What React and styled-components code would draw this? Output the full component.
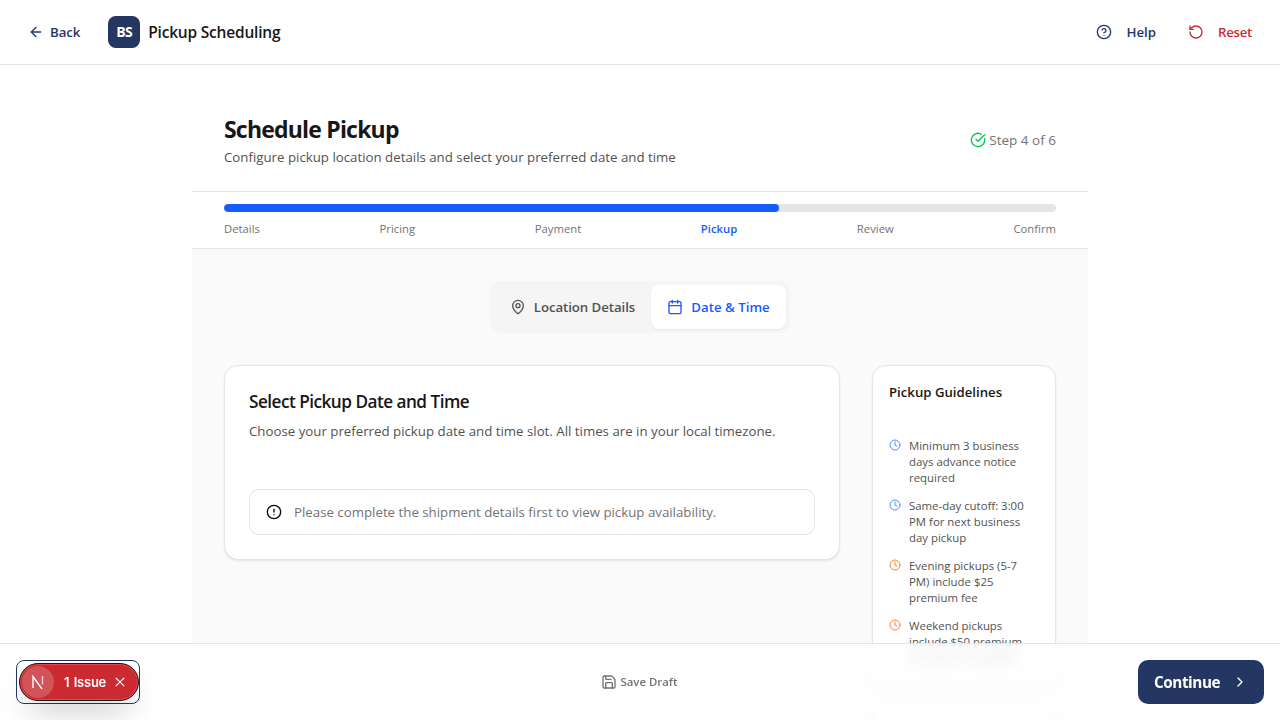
import React from 'react';
import styled, { createGlobalStyle } from 'styled-components';
import {
  ArrowLeft,
  CircleHelp,
  RotateCcw,
  CircleCheckBig,
  MapPin,
  Calendar,
  CircleAlert,
  Clock,
  Save,
  ChevronRight,
} from 'lucide-react';

const GlobalStyle = createGlobalStyle`
  *, *::before, *::after { box-sizing: border-box; }
  html, body { margin: 0; height: 100%; overflow: hidden; }
  body {
    background: #fff;
    color: #171717;
    font-family: 'Open Sans', 'Noto Sans', sans-serif;
    font-size: 13.28px;
    line-height: 20px;
  }
  h1, h2, h3, p, ul { margin: 0; padding: 0; }
  button { font: inherit; border: 0; background: none; padding: 0; }
  svg { flex-shrink: 0; display: block; }
`;

const Page = styled.div`
  height: 720px;
  overflow: hidden;
`;

const TopBar = styled.header`
  height: 65px;
  padding: 0 28px;
  display: flex;
  align-items: center;
  justify-content: space-between;
  border-bottom: 1px solid #e5e5e5;
  background: #fff;
`;

const BarGroup = styled.div`
  display: flex;
  align-items: center;
  gap: ${(p) => p.$gap}px;
`;

const TextButton = styled.button`
  display: flex;
  align-items: center;
  gap: ${(p) => p.$gap}px;
  font-weight: 600;
  letter-spacing: ${(p) => p.$tracking || 0}px;
  color: ${(p) => (p.$danger ? '#cb2a31' : '#243763')};
`;

const Brand = styled.div`
  display: flex;
  align-items: center;
  gap: 8px;
  font-size: 15.5px;
  line-height: 24px;
  font-weight: 600;
  letter-spacing: -0.2px;
`;

const Logo = styled.span`
  width: 32px;
  height: 32px;
  border-radius: 8px;
  display: grid;
  place-items: center;
  background: #243763;
  color: #fff;
  font-size: 14px;
  font-weight: 700;
  letter-spacing: -0.5px;
`;

const Main = styled.main`
  width: 896px;
  margin: 0 auto;
`;

const Intro = styled.section`
  height: 127px;
  padding: 24px 32px 0;
  display: flex;
  align-items: center;
  justify-content: space-between;
  border-bottom: 1px solid #e5e5e5;
`;

const Title = styled.h1`
  font-size: 23px;
  line-height: 32px;
  font-weight: 700;
  letter-spacing: -0.8px;
`;

const Lead = styled.p`
  margin-top: 2px;
  color: #525252;
`;

const StepCount = styled.div`
  display: flex;
  align-items: center;
  gap: 3px;
  font-size: 13.5px;
  color: #737373;
  svg { color: #00c951; }
`;

const Progress = styled.section`
  padding: 12px 32px 11px;
  border-bottom: 1px solid #e5e5e5;
`;

const Track = styled.div`
  height: 8px;
  border-radius: 4px;
  background: #e5e5e5;
  overflow: hidden;
`;

const Fill = styled.div`
  height: 100%;
  border-radius: 4px;
  background: #155dfc;
`;

const Steps = styled.div`
  margin-top: 9px;
  display: flex;
  justify-content: space-between;
  font-size: 11.3px;
  line-height: 16px;
`;

const Step = styled.span`
  color: ${(p) => (p.$active ? '#155dfc' : '#737373')};
  font-weight: ${(p) => (p.$active ? 600 : 400)};
`;

const Content = styled.section`
  padding: 32px;
  background: #fafafa;
`;

const Tabs = styled.div`
  width: 300px;
  height: 52px;
  margin: 0 auto;
  padding: 4px;
  display: flex;
  border-radius: 10px;
  background: #f5f5f5;
`;

const Tab = styled.button`
  display: flex;
  align-items: center;
  justify-content: center;
  gap: 8px;
  flex: 0 0 ${(p) => p.$width}px;
  letter-spacing: ${(p) => p.$tracking || 0}px;
  border-radius: 8px;
  font-weight: 600;
  color: ${(p) => (p.$active ? '#155dfc' : '#525252')};
  background: ${(p) => (p.$active ? '#fff' : 'transparent')};
  box-shadow: ${(p) => (p.$active ? '0 1px 2px rgba(0, 0, 0, 0.06)' : 'none')};
`;

const Columns = styled.div`
  margin-top: 32px;
  display: grid;
  grid-template-columns: 616px 184px;
  gap: 32px;
  align-items: start;
`;

const Card = styled.div`
  min-height: ${(p) => p.$minHeight || 0}px;
  padding: ${(p) => p.$pad}px;
  border: 1px solid #e5e5e5;
  border-radius: 14px;
  background: #fff;
  box-shadow: 0 1px 3px rgba(0, 0, 0, 0.05), 0 1px 2px rgba(0, 0, 0, 0.04);
`;

const CardTitle = styled.h2`
  font-size: 17.2px;
  line-height: 23px;
  font-weight: 600;
  letter-spacing: -0.52px;
`;

const CardText = styled.p`
  margin-top: 8px;
  color: #525252;
`;

const Notice = styled.div`
  margin-top: 48px;
  height: 46px;
  padding: 0 16px;
  display: flex;
  align-items: center;
  gap: 12px;
  border: 1px solid #e5e5e5;
  border-radius: 10px;
  color: #737373;
  svg { color: #0a0a0a; }
`;

const Sidebar = styled.aside`
  display: grid;
  gap: 24px;
`;

const SideTitle = styled.h3`
  font-size: 13.2px;
  line-height: 20px;
  font-weight: 600;
`;

const Rules = styled.ul`
  margin-top: 36px;
  display: grid;
  gap: 12px;
  list-style: none;
`;

const Rule = styled.li`
  display: flex;
  gap: 8px;
  font-size: 11.4px;
  line-height: 16px;
  color: #525252;
  white-space: pre-line;
  svg { margin-top: 1px; color: ${(p) => (p.$fee ? '#ff8133' : '#5092ff')}; }
`;

const Footer = styled.footer`
  position: fixed;
  left: 0;
  right: 0;
  bottom: 0;
  height: 77px;
  padding: 0 16px;
  display: grid;
  grid-template-columns: 1fr auto 1fr;
  align-items: center;
  border-top: 1px solid #e5e5e5;
  background: rgba(255, 255, 255, 0.7);
  backdrop-filter: blur(8px);
`;

const IssueFrame = styled.div`
  justify-self: start;
  width: 124px;
  height: 44px;
  padding: 2px 0 0 2px;
  border: 1px solid #243763;
  border-radius: 8px;
`;

const IssuePill = styled.div`
  width: 120px;
  height: 38px;
  padding-left: 2px;
  display: flex;
  align-items: center;
  border: 1px solid #171717;
  border-radius: 19px;
  background: #ca2a30;
  color: #fff;
  font: 600 13px/16px Inter, 'Liberation Sans', sans-serif;
  letter-spacing: -0.25px;
  word-spacing: 1.5px;
  box-shadow: inset 0 0 0 1px #e5484d, 0 16px 32px -8px rgba(0, 0, 0, 0.24);
`;

const IssueMark = styled.span`
  width: 32px;
  height: 32px;
  margin-right: 10px;
  display: grid;
  place-items: center;
  border-radius: 50%;
  background: #d3535a;
`;

const IssueClose = styled.svg`
  margin-left: 9px;
`;

const SaveDraft = styled.button`
  display: flex;
  align-items: center;
  gap: 4px;
  margin-right: 2px;
  font-size: 11.4px;
  line-height: 16px;
  font-weight: 600;
  color: #737373;
`;

const Continue = styled.button`
  justify-self: end;
  width: 126px;
  height: 44px;
  padding: 0 16px;
  display: flex;
  align-items: center;
  justify-content: space-between;
  border-radius: 10px;
  background: #243763;
  color: #fff;
  font-size: 15.3px;
  line-height: 24px;
  font-weight: 700;
  letter-spacing: -0.45px;
`;

const steps = ['Details', 'Pricing', 'Payment', 'Pickup', 'Review', 'Confirm'];
const currentStep = 3;

const rules = [
  { text: 'Minimum 3 business\ndays advance notice\nrequired' },
  { text: 'Same-day cutoff: 3:00\nPM for next business\nday pickup' },
  { text: 'Evening pickups (5-7\nPM) include $25\npremium fee', fee: true },
  { text: 'Weekend pickups\ninclude $50 premium\nfee (where available)', fee: true },
];

export default function App() {
  return (
    <Page>
      <GlobalStyle />
      <TopBar>
        <BarGroup $gap={28}>
          <TextButton $gap={6} $tracking={-0.1}>
            <ArrowLeft size={16} />
            Back
          </TextButton>
          <Brand>
            <Logo>BS</Logo>
            Pickup Scheduling
          </Brand>
        </BarGroup>
        <BarGroup $gap={32}>
          <TextButton $gap={14}>
            <CircleHelp size={16} />
            Help
          </TextButton>
          <TextButton $gap={14} $tracking={-0.3} $danger>
            <RotateCcw size={16} />
            Reset
          </TextButton>
        </BarGroup>
      </TopBar>

      <Main>
        <Intro>
          <div>
            <Title>Schedule Pickup</Title>
            <Lead>Configure pickup location details and select your preferred date and time</Lead>
          </div>
          <StepCount>
            <CircleCheckBig size={16} />
            Step 4 of 6
          </StepCount>
        </Intro>

        <Progress>
          <Track>
            <Fill style={{ width: `${((currentStep + 1) / steps.length) * 100}%` }} />
          </Track>
          <Steps>
            {steps.map((name, i) => (
              <Step key={name} $active={i === currentStep}>{name}</Step>
            ))}
          </Steps>
        </Progress>

        <Content>
          <Tabs>
            <Tab $width={157} $tracking={-0.08}>
              <MapPin size={16} />
              Location Details
            </Tab>
            <Tab $width={135} $active>
              <Calendar size={16} />
              Date &amp; Time
            </Tab>
          </Tabs>

          <Columns>
            <Card $pad={24}>
              <CardTitle>Select Pickup Date and Time</CardTitle>
              <CardText>
                Choose your preferred pickup date and time slot. All times are in your local timezone.
              </CardText>
              <Notice>
                <CircleAlert size={16} />
                Please complete the shipment details first to view pickup availability.
              </Notice>
            </Card>

            <Sidebar>
              <Card $pad={16}>
                <SideTitle>Pickup Guidelines</SideTitle>
                <Rules>
                  {rules.map((rule) => (
                    <Rule key={rule.text} $fee={rule.fee}>
                      <Clock size={12} />
                      {rule.text}
                    </Rule>
                  ))}
                </Rules>
              </Card>
              <Card $pad={16} $minHeight={120} />
            </Sidebar>
          </Columns>
        </Content>
      </Main>

      <Footer>
        <IssueFrame>
          <IssuePill>
            <IssueMark>
              <svg width="14" height="14" viewBox="0 0 14 14" fill="none" stroke="#fff" strokeWidth="1.4">
                <path d="M2 13V1.5L11 14" />
                <path d="M11.5 1v8.5" opacity="0.7" />
              </svg>
            </IssueMark>
            1 Issue
            <IssueClose width="10" height="10" viewBox="0 0 10 10" fill="none" stroke="#fff" strokeWidth="1.2">
              <path d="M0.8 0.8l8.4 8.4M9.2 0.8L0.8 9.2" />
            </IssueClose>
          </IssuePill>
        </IssueFrame>
        <SaveDraft>
          <Save size={16} />
          Save Draft
        </SaveDraft>
        <Continue>
          Continue
          <ChevronRight size={16} />
        </Continue>
      </Footer>
    </Page>
  );
}
